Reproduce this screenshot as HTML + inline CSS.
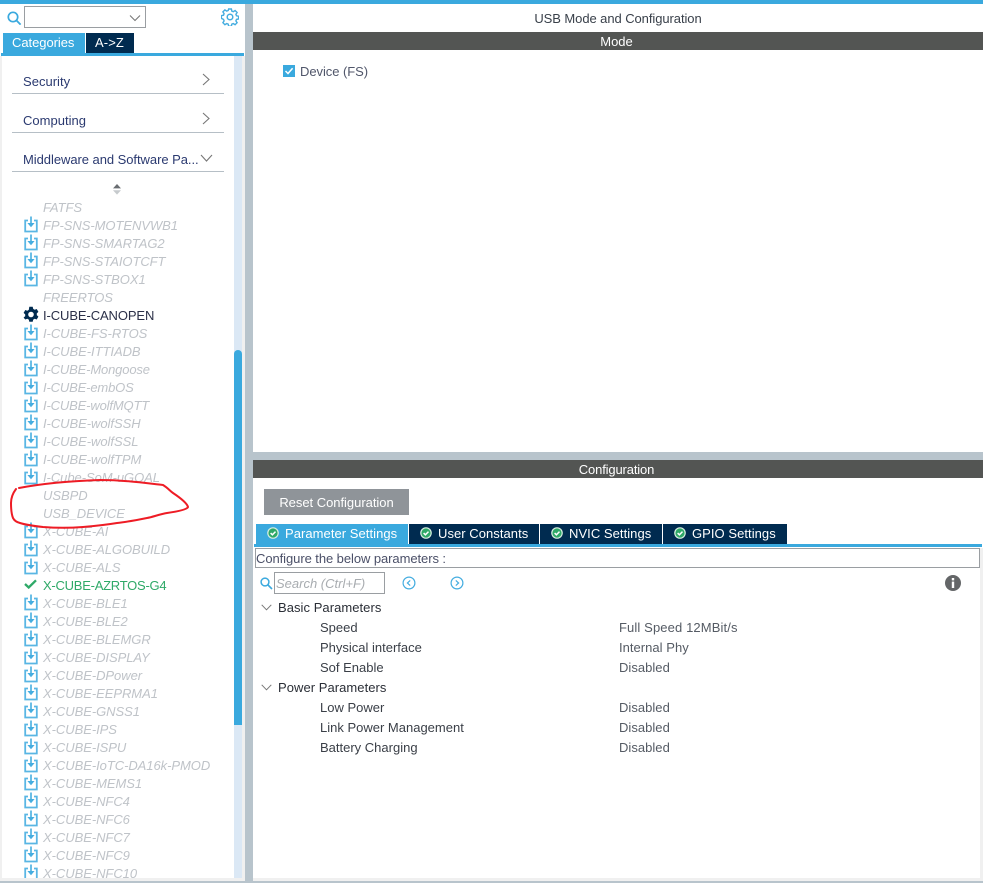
<!DOCTYPE html>
<html><head><meta charset="utf-8">
<style>
html,body{margin:0;padding:0;background:#fff}
body{width:983px;height:887px;position:relative;overflow:hidden;font:13px "Liberation Sans",Arial,sans-serif;color:#39404a}
.a{position:absolute}
.t{position:absolute;white-space:nowrap;line-height:18px;height:18px;margin-top:1px}
#list{position:absolute;left:0;top:198px;width:233px;height:680px;overflow:hidden}
#list div{position:absolute;left:43px;white-space:nowrap;line-height:18px;height:18px;margin-top:1px;font-style:italic;color:#bfc3c8;letter-spacing:-.05px}
#list svg{position:absolute;left:24px;width:14px;height:17px}
.sec{color:#2b3a70;letter-spacing:.02px}
.line{position:absolute;left:12px;width:212px;height:1px;background:#b6bfc6}
.tab{position:absolute;top:524px;height:20px;background:#002b50;color:#fff;line-height:19px;letter-spacing:.05px;white-space:nowrap}
.tab svg{position:absolute;left:11px;top:3px;width:12px;height:12px}
.tab span{position:absolute;top:0}
.p{color:#3a3f47;letter-spacing:0}
.v{color:#555b64;letter-spacing:.03px}
</style></head><body>
<svg width="0" height="0" style="position:absolute"><defs>
<symbol id="dl" viewBox="0 0 14 17"><path d="M4 4.5H1.2V15.5H12.8V4.5H10" fill="none" stroke="#5ab6e4" stroke-width="1.8"/><path d="M7 .5V9" stroke="#45ade0" stroke-width="1.6" fill="none"/><path d="M3.4 7H10.6L7 11.2Z" fill="#45ade0"/></symbol>
<symbol id="ok" viewBox="0 0 12 12"><circle cx="6" cy="6" r="5.8" fill="#d8efe0"/><circle cx="6" cy="6" r="4.6" fill="#2fa968"/><path d="M3.6 6.1 5.4 7.8 8.5 4.6" fill="none" stroke="#fff" stroke-width="1.5"/></symbol>
</defs></svg>

<!-- frame -->
<div class="a" style="left:0;top:0;width:983px;height:4px;background:#3aa9de"></div>
<div class="a" style="left:245px;top:4px;width:8px;height:879px;background:#b8c4cc"></div>
<div class="a" style="left:0;top:4px;width:245px;height:877px;background:#fff"></div>
<div class="a" style="left:0;top:56px;width:2px;height:825px;background:#f0f0f0"></div>
<div class="a" style="left:0;top:878px;width:245px;height:3px;background:#f0f0f0"></div>
<div class="a" style="left:242px;top:56px;width:3px;height:825px;background:#f0f0f0"></div>
<div class="a" style="left:0;top:881px;width:983px;height:2px;background:#b8c4cc"></div>
<div class="a" style="left:253px;top:878px;width:730px;height:3px;background:#f0f0f0"></div>

<!-- sidebar header -->
<svg class="a" style="left:7px;top:11px" width="15" height="14" viewBox="0 0 15 14"><circle cx="6" cy="6" r="4.7" fill="none" stroke="#3aa9de" stroke-width="1.7"/><path d="M9.4 9.4 13.6 13.6" stroke="#3aa9de" stroke-width="1.8"/></svg>
<div class="a" style="left:24px;top:6px;width:120px;height:20px;border:1px solid #9a9ea2"></div>
<svg class="a" style="left:129px;top:14px" width="12" height="8" viewBox="0 0 12 8"><path d="M1 1.5 6 6.5 11 1.5" fill="none" stroke="#777" stroke-width="1.1"/></svg>
<svg class="a" style="left:221px;top:8px" width="18" height="18" viewBox="0 0 18 18"><path d="M7.6 1h2.8l.4 2.1 1.5.6 1.8-1.2 2 2-1.2 1.8.6 1.5 2.1.4v2.8l-2.1.4-.6 1.5 1.2 1.8-2 2-1.8-1.2-1.5.6-.4 2.1H7.6l-.4-2.1-1.5-.6-1.8 1.2-2-2 1.2-1.8-.6-1.5L.4 10.4V7.6l2.1-.4.6-1.5-1.2-1.8 2-2 1.8 1.2 1.5-.6z" fill="none" stroke="#45ade0" stroke-width="1.4"/><circle cx="9" cy="9" r="2.8" fill="none" stroke="#45ade0" stroke-width="1.5"/></svg>
<div class="a" style="left:3px;top:33px;width:82px;height:20px;background:#3aa9de"></div>
<div class="t" style="left:12px;top:33px;color:#fff;letter-spacing:-.05px">Categories</div>
<div class="a" style="left:86px;top:33px;width:48px;height:20px;background:#002b50"></div>
<div class="t" style="left:95px;top:33px;color:#fff;letter-spacing:.1px">A-&gt;Z</div>
<div class="a" style="left:1px;top:53px;width:243px;height:3px;background:#3aa9de"></div>

<!-- categories -->
<div class="t sec" style="left:23px;top:72px">Security</div>
<svg class="a" style="left:202px;top:73px" width="8" height="13" viewBox="0 0 8 13"><path d="M1 1 7 6.5 1 12" fill="none" stroke="#777" stroke-width="1.1"/></svg>
<div class="line" style="top:93px"></div>
<div class="t sec" style="left:23px;top:111px">Computing</div>
<svg class="a" style="left:202px;top:112px" width="8" height="13" viewBox="0 0 8 13"><path d="M1 1 7 6.5 1 12" fill="none" stroke="#777" stroke-width="1.1"/></svg>
<div class="line" style="top:132px"></div>
<div class="t sec" style="left:23px;top:150px;letter-spacing:-.05px">Middleware and Software Pa...</div>
<svg class="a" style="left:200px;top:154px" width="13" height="8" viewBox="0 0 13 8"><path d="M1 1 6.5 7 12 1" fill="none" stroke="#777" stroke-width="1.1"/></svg>
<div class="line" style="top:171px"></div>
<svg class="a" style="left:112px;top:184px" width="10" height="11" viewBox="0 0 10 11"><path d="M5 0 9 4.4H1Z" fill="#6a6e72"/><path d="M1 6.2H9L5 10.6Z" fill="#c6cacd"/></svg>

<!-- list -->
<div id="list">
<div style="top:0">FATFS</div>
<svg style="top:18px"><use href="#dl"/></svg><div style="top:18px">FP-SNS-MOTENVWB1</div>
<svg style="top:36px"><use href="#dl"/></svg><div style="top:36px">FP-SNS-SMARTAG2</div>
<svg style="top:54px"><use href="#dl"/></svg><div style="top:54px">FP-SNS-STAIOTCFT</div>
<svg style="top:72px"><use href="#dl"/></svg><div style="top:72px">FP-SNS-STBOX1</div>
<div style="top:90px">FREERTOS</div>
<svg style="top:108px;left:23px;width:16px;height:17px" viewBox="0 0 16 17"><path d="M6.3.8h3.4l.5 2.1 1.5.8 2-.7 1.7 2.9-1.6 1.5v1.7l1.6 1.5-1.7 2.9-2-.7-1.5.8-.5 2.1H6.3l-.5-2.1-1.5-.8-2 .7L.6 11.6l1.6-1.5V8.4L.6 6.9l1.7-2.9 2 .7 1.5-.8z" fill="#002b50"/><circle cx="8" cy="8.5" r="2.8" fill="#fff"/></svg><div style="top:108px;font-style:normal;color:#2b3048;letter-spacing:-.1px">I-CUBE-CANOPEN</div>
<svg style="top:126px"><use href="#dl"/></svg><div style="top:126px">I-CUBE-FS-RTOS</div>
<svg style="top:144px"><use href="#dl"/></svg><div style="top:144px">I-CUBE-ITTIADB</div>
<svg style="top:162px"><use href="#dl"/></svg><div style="top:162px;letter-spacing:-.15px">I-CUBE-Mongoose</div>
<svg style="top:180px"><use href="#dl"/></svg><div style="top:180px;letter-spacing:-.15px">I-CUBE-embOS</div>
<svg style="top:198px"><use href="#dl"/></svg><div style="top:198px;letter-spacing:-.15px">I-CUBE-wolfMQTT</div>
<svg style="top:216px"><use href="#dl"/></svg><div style="top:216px">I-CUBE-wolfSSH</div>
<svg style="top:234px"><use href="#dl"/></svg><div style="top:234px">I-CUBE-wolfSSL</div>
<svg style="top:252px"><use href="#dl"/></svg><div style="top:252px">I-CUBE-wolfTPM</div>
<svg style="top:270px"><use href="#dl"/></svg><div style="top:270px">I-Cube-SoM-uGOAL</div>
<div style="top:288px">USBPD</div>
<div style="top:306px">USB_DEVICE</div>
<svg style="top:324px"><use href="#dl"/></svg><div style="top:324px">X-CUBE-AI</div>
<svg style="top:342px"><use href="#dl"/></svg><div style="top:342px">X-CUBE-ALGOBUILD</div>
<svg style="top:360px"><use href="#dl"/></svg><div style="top:360px">X-CUBE-ALS</div>
<svg style="top:381px;left:24px;width:13px;height:10px" viewBox="0 0 13 10"><path d="M1 5 4.7 8.5 12 1.3" fill="none" stroke="#2fa968" stroke-width="2.3"/></svg><div style="top:378px;font-style:normal;color:#2fa968;letter-spacing:-.25px">X-CUBE-AZRTOS-G4</div>
<svg style="top:396px"><use href="#dl"/></svg><div style="top:396px">X-CUBE-BLE1</div>
<svg style="top:414px"><use href="#dl"/></svg><div style="top:414px">X-CUBE-BLE2</div>
<svg style="top:432px"><use href="#dl"/></svg><div style="top:432px">X-CUBE-BLEMGR</div>
<svg style="top:450px"><use href="#dl"/></svg><div style="top:450px">X-CUBE-DISPLAY</div>
<svg style="top:468px"><use href="#dl"/></svg><div style="top:468px">X-CUBE-DPower</div>
<svg style="top:486px"><use href="#dl"/></svg><div style="top:486px">X-CUBE-EEPRMA1</div>
<svg style="top:504px"><use href="#dl"/></svg><div style="top:504px">X-CUBE-GNSS1</div>
<svg style="top:522px"><use href="#dl"/></svg><div style="top:522px">X-CUBE-IPS</div>
<svg style="top:540px"><use href="#dl"/></svg><div style="top:540px">X-CUBE-ISPU</div>
<svg style="top:558px"><use href="#dl"/></svg><div style="top:558px">X-CUBE-IoTC-DA16k-PMOD</div>
<svg style="top:576px"><use href="#dl"/></svg><div style="top:576px">X-CUBE-MEMS1</div>
<svg style="top:594px"><use href="#dl"/></svg><div style="top:594px">X-CUBE-NFC4</div>
<svg style="top:612px"><use href="#dl"/></svg><div style="top:612px">X-CUBE-NFC6</div>
<svg style="top:630px"><use href="#dl"/></svg><div style="top:630px">X-CUBE-NFC7</div>
<svg style="top:648px"><use href="#dl"/></svg><div style="top:648px">X-CUBE-NFC9</div>
<svg style="top:666px"><use href="#dl"/></svg><div style="top:666px">X-CUBE-NFC10</div>
</div>

<!-- scrollbar -->
<div class="a" style="left:234px;top:56px;width:8px;height:822px;background:#dbe8f5"></div>
<div class="a" style="left:234px;top:350px;width:8px;height:375px;background:#3aa9de;border-radius:4px 4px 0 0"></div>

<!-- red annotation -->
<svg class="a" style="left:0;top:470px" width="200" height="70" viewBox="0 470 200 70"><path d="M19 488C40 484 70 481 100 480C125 480 145 483 163 485C168 488 170 491 173 493C179 497 187 503 188 507C187 510 174 512 167 513C160 514 153 517 147 518C137 520 127 522 117 523C105 525 95 526 83 527C70 528 56 528 43 527C34 526 26 525 20 523C16 522 14 520 13 518C11 513 11 508 11 503C11 497 13 493 16 489" fill="none" stroke="#ee1c25" stroke-width="2" stroke-linecap="round"/></svg>

<!-- right: mode -->
<div class="t" style="left:253px;width:730px;top:9px;text-align:center;color:#39404a;letter-spacing:-.07px">USB Mode and Configuration</div>
<div class="a" style="left:253px;top:32px;width:730px;height:18px;background:#535553"></div>
<div class="t" style="left:253px;width:727px;top:32px;text-align:center;color:#fff">Mode</div>
<div class="a" style="left:283px;top:65px;width:12px;height:12px;background:#3aa9de"></div>
<svg class="a" style="left:283px;top:65px" width="12" height="12" viewBox="0 0 12 12"><path d="M2.5 6 5 8.5 9.6 3.2" fill="none" stroke="#fff" stroke-width="1.5"/></svg>
<div class="t" style="left:300px;top:62px;color:#50566a;letter-spacing:-.05px">Device (FS)</div>

<!-- right: configuration -->
<div class="a" style="left:253px;top:452px;width:730px;height:8px;background:#b8c4cc"></div>
<div class="a" style="left:253px;top:460px;width:730px;height:18px;background:#535553"></div>
<div class="t" style="left:253px;width:727px;top:460px;text-align:center;color:#fff;letter-spacing:-.15px">Configuration</div>
<div class="a" style="left:264px;top:489px;width:145px;height:26px;background:#8f9499"></div>
<div class="t" style="left:264px;width:145px;top:493px;text-align:center;color:#fff;letter-spacing:-.03px">Reset Configuration</div>

<div class="tab" style="left:256px;width:152px;background:#3aa9de"><svg><use href="#ok"/></svg><span style="left:29px">Parameter Settings</span></div>
<div class="tab" style="left:409px;width:130px"><svg><use href="#ok"/></svg><span style="left:29px">User Constants</span></div>
<div class="tab" style="left:540px;width:122px"><svg><use href="#ok"/></svg><span style="left:29px">NVIC Settings</span></div>
<div class="tab" style="left:663px;width:124px"><svg><use href="#ok"/></svg><span style="left:29px">GPIO Settings</span></div>
<div class="a" style="left:254px;top:544px;width:728px;height:3px;background:#3aa9de"></div>
<div class="a" style="left:255px;top:548px;width:723px;height:18px;border:1px solid #9a9ea2"></div>
<div class="t" style="left:256px;top:549px;color:#4b5068;letter-spacing:-.07px">Configure the below parameters :</div>
<div class="a" style="left:980px;top:548px;width:3px;height:330px;background:#f0f0f0"></div>

<svg class="a" style="left:260px;top:577px" width="13" height="13" viewBox="0 0 13 13"><circle cx="5" cy="5" r="3.9" fill="none" stroke="#3aa9de" stroke-width="1.5"/><path d="M8 8 12 12" stroke="#3aa9de" stroke-width="1.6"/></svg>
<div class="a" style="left:274px;top:572px;width:109px;height:20px;border:1px solid #9a9ea2"></div>
<div class="t" style="left:276px;top:574px;color:#a8acb0;font-style:italic;letter-spacing:0">Search (Ctrl+F)</div>
<svg class="a" style="left:402px;top:576px" width="14" height="14" viewBox="0 0 14 14"><circle cx="7" cy="7" r="5.9" fill="none" stroke="#45ade0" stroke-width="1.2"/><path d="M8.2 4.4 5.4 7 8.2 9.6" fill="none" stroke="#45ade0" stroke-width="1.2"/></svg>
<svg class="a" style="left:450px;top:576px" width="14" height="14" viewBox="0 0 14 14"><circle cx="7" cy="7" r="5.9" fill="none" stroke="#45ade0" stroke-width="1.2"/><path d="M5.8 4.4 8.6 7 5.8 9.6" fill="none" stroke="#45ade0" stroke-width="1.2"/></svg>
<svg class="a" style="left:945px;top:575px" width="16" height="16" viewBox="0 0 16 16"><circle cx="8" cy="8" r="8" fill="#646668"/><rect x="6.8" y="3" width="2.4" height="2.4" fill="#fff"/><rect x="6.8" y="6.6" width="2.4" height="6.4" fill="#fff"/></svg>

<svg class="a" style="left:261px;top:604px" width="11" height="7" viewBox="0 0 11 7"><path d="M.7 .8 5.5 5.8 10.3 .8" fill="none" stroke="#777" stroke-width="1"/></svg>
<div class="t p" style="left:278px;top:598px;color:#2a2e36;letter-spacing:.05px">Basic Parameters</div>
<div class="t p" style="left:320px;top:618px">Speed</div><div class="t v" style="left:619px;top:618px;letter-spacing:.12px">Full Speed 12MBit/s</div>
<div class="t p" style="left:320px;top:638px">Physical interface</div><div class="t v" style="left:619px;top:638px">Internal Phy</div>
<div class="t p" style="left:320px;top:658px">Sof Enable</div><div class="t v" style="left:619px;top:658px">Disabled</div>
<svg class="a" style="left:261px;top:684px" width="11" height="7" viewBox="0 0 11 7"><path d="M.7 .8 5.5 5.8 10.3 .8" fill="none" stroke="#777" stroke-width="1"/></svg>
<div class="t p" style="left:278px;top:678px;color:#2a2e36;letter-spacing:.05px">Power Parameters</div>
<div class="t p" style="left:320px;top:698px">Low Power</div><div class="t v" style="left:619px;top:698px">Disabled</div>
<div class="t p" style="left:320px;top:718px">Link Power Management</div><div class="t v" style="left:619px;top:718px">Disabled</div>
<div class="t p" style="left:320px;top:738px">Battery Charging</div><div class="t v" style="left:619px;top:738px">Disabled</div>
</body></html>
